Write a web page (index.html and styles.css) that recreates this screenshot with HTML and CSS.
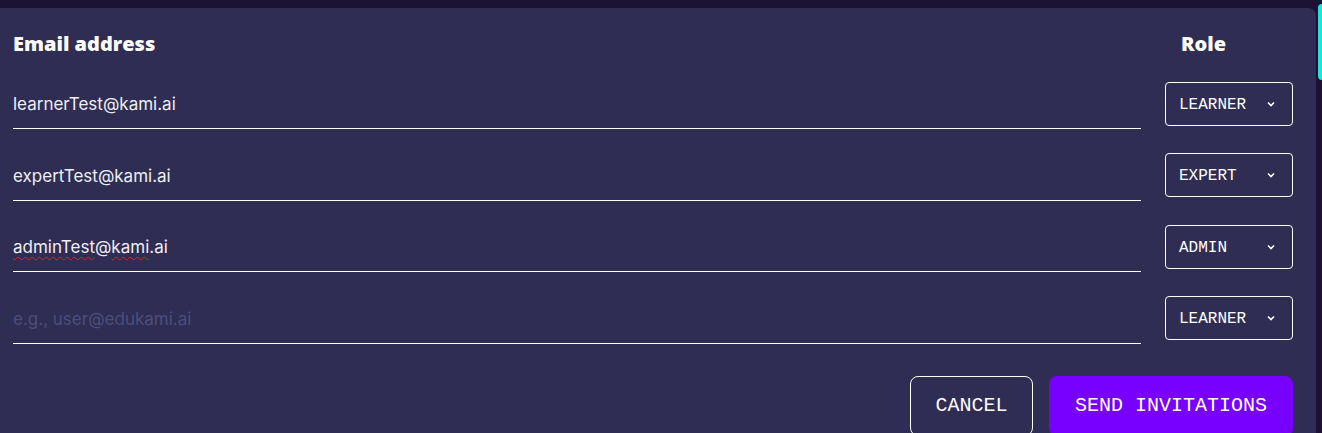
FILE: index.html
```html
<!DOCTYPE html>
<html lang="en">
<head>
<meta charset="utf-8">
<title>Invite users</title>
<link rel="stylesheet" href="styles.css">
</head>
<body>
<div class="page">
  <div class="panel">
    <div class="grid">
      <div class="head">Email address</div>
      <div class="head head-role">Role</div>

      <div class="field"><span>learnerTest@kami.ai</span></div>
      <div class="select"><span>LEARNER</span><svg class="chev" width="8" height="6" viewBox="0 0 8 6"><path d="M1 1.5 L4 4.5 L7 1.5" fill="none" stroke="#fff" stroke-width="1.6"/></svg></div>

      <div class="field"><span>expertTest@kami.ai</span></div>
      <div class="select"><span>EXPERT</span><svg class="chev" width="8" height="6" viewBox="0 0 8 6"><path d="M1 1.5 L4 4.5 L7 1.5" fill="none" stroke="#fff" stroke-width="1.6"/></svg></div>

      <div class="field"><span><span class="misspelt">adminTest</span>@<span class="misspelt">kami</span>.ai</span></div>
      <div class="select"><span>ADMIN</span><svg class="chev" width="8" height="6" viewBox="0 0 8 6"><path d="M1 1.5 L4 4.5 L7 1.5" fill="none" stroke="#fff" stroke-width="1.6"/></svg></div>

      <div class="field"><span class="placeholder">e.g., user@edukami.ai</span></div>
      <div class="select"><span>LEARNER</span><svg class="chev" width="8" height="6" viewBox="0 0 8 6"><path d="M1 1.5 L4 4.5 L7 1.5" fill="none" stroke="#fff" stroke-width="1.6"/></svg></div>
    </div>
    <div class="actions">
      <button class="btn btn-cancel">CANCEL</button>
      <button class="btn btn-send">SEND INVITATIONS</button>
    </div>
  </div>
  <div class="scroll"><div class="thumb"></div></div>
</div>
</body>
</html>
```

FILE: styles.css
```css
* { box-sizing: border-box; }
html, body {
  margin: 0;
  height: 100%;
  background: #1c1233;
  overflow: hidden;
}
body {
  font-family: "Inter", "Noto Sans", sans-serif;
  color: #f2f1f8;
}
.page {
  display: flex;
  padding-top: 8px;
  height: 100%;
}
.panel {
  width: 1316px;
  background: #2f2d53;
  border-top-right-radius: 8px;
  padding: 24px 23px 0 13px;
}
.scroll {
  flex: 1;
  padding-left: 2px;
  margin-top: -4px;
}
.thumb {
  height: 76px;
  background: #19e6d6;
  border-radius: 4px 0 0 4px;
}
.grid {
  display: grid;
  grid-template-columns: 1fr 128px;
  column-gap: 24px;
  row-gap: 23.5px;
  align-items: center;
}
.head {
  font-family: "Open Sans", sans-serif;
  font-weight: 800;
  font-size: 20px;
  line-height: 24px;
  color: #ffffff;
  margin-bottom: 1.5px;
}
.head-role {
  padding-left: 16px;
}
.field {
  height: 48px;
  display: flex;
  align-items: center;
  border-bottom: 1px solid #ffffff;
  font-size: 17px;
  color: #eeeef6;
  padding-bottom: 1px;
}
.placeholder { color: #4e4c7e; }
.misspelt {
  text-decoration: underline wavy #e8202a;
  text-decoration-thickness: 1.2px;
  text-underline-offset: 3px;
}
.select {
  height: 44px;
  border: 1px solid #ffffff;
  border-radius: 4px;
  display: flex;
  align-items: center;
  justify-content: space-between;
  padding: 0 17px 0 13px;
  font-family: "Liberation Mono", monospace;
  font-size: 16px;
  color: #ffffff;
  margin-top: -3px;
}
.select span { padding-top: 2px; }
.chev { display: block; }
.actions {
  display: flex;
  justify-content: flex-end;
  gap: 16px;
  margin-top: 32px;
}
.btn {
  height: 60px;
  border-radius: 8px;
  font-family: "Liberation Mono", monospace;
  font-size: 20px;
  color: #ffffff;
  cursor: pointer;
}
.btn-cancel {
  width: 123px;
  background: transparent;
  border: 1px solid #ffffff;
}
.btn-send {
  width: 244px;
  background: #7700ff;
  border: none;
}
```
